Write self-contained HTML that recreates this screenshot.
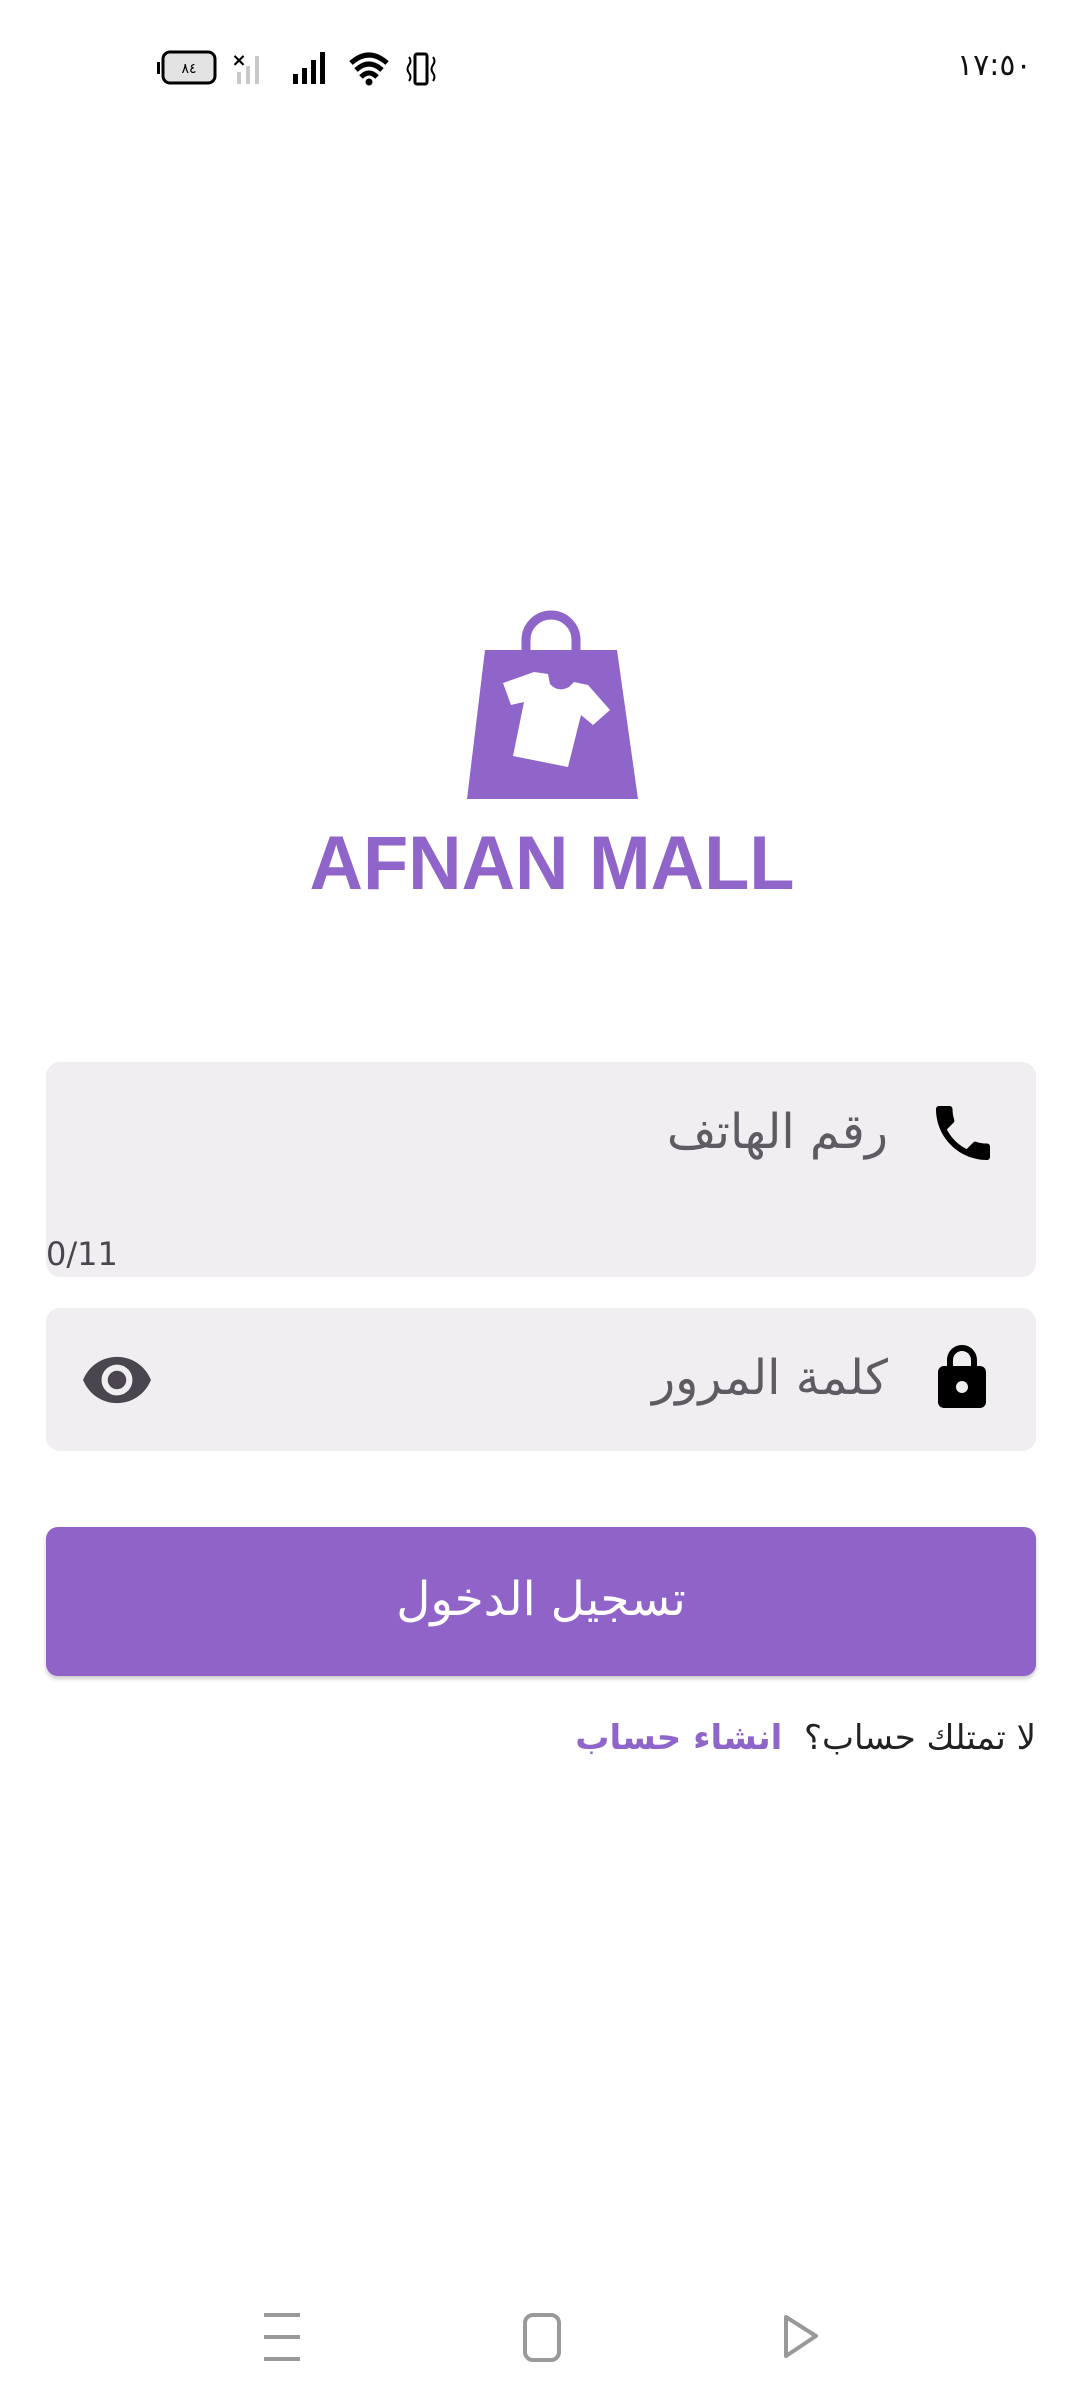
<!DOCTYPE html>
<html><head><meta charset="utf-8"><style>
*{margin:0;padding:0;box-sizing:border-box}
body{width:1080px;height:2400px;background:#fff;position:relative;overflow:hidden;font-family:"Liberation Sans","Noto Sans CJK SC","DejaVu Sans",sans-serif}
.abs{position:absolute}
.field{position:absolute;left:46px;width:990px;background:#f0eef1;border-radius:14px}
.lbl{position:absolute;color:#5f5b63;font-size:48px;direction:rtl;white-space:nowrap;font-family:"DejaVu Sans",sans-serif;font-weight:300}
</style></head><body>
<!-- status bar -->
<div class="abs" style="left:957px;top:48px;font-size:30px;color:#111;font-family:'DejaVu Sans',sans-serif">١٧:٥٠</div>
<svg class="abs" style="left:157px;top:48px" width="290" height="40" viewBox="0 0 290 40">
<rect x="0" y="14" width="3" height="12" fill="#000"/>
<rect x="6" y="4" width="52" height="31" rx="7" fill="#e3e3e3" stroke="#000" stroke-width="3"/>
<text x="32" y="25" font-size="14" text-anchor="middle" font-family="DejaVu Sans" fill="#000">٨٤</text>
<text x="82" y="18" font-size="18" font-weight="bold" font-family="DejaVu Sans" text-anchor="middle">×</text>
<rect x="80" y="24" width="4" height="12" fill="#c8c8c8"/><rect x="89" y="18" width="4" height="18" fill="#c8c8c8"/><rect x="98" y="8" width="4" height="28" fill="#c8c8c8"/>
<rect x="136" y="26" width="5" height="10" fill="#000"/><rect x="145" y="20" width="5" height="16" fill="#000"/><rect x="154" y="12" width="5" height="24" fill="#000"/><rect x="163" y="4" width="5" height="32" fill="#000"/>
<path d="M194 15 Q212 -1 230 15" stroke="#000" stroke-width="5" fill="none"/><path d="M199 22 Q212 10 225 22" stroke="#000" stroke-width="5" fill="none"/><path d="M204 29 Q212 21 220 29" stroke="#000" stroke-width="5" fill="none"/><circle cx="212" cy="34" r="3.5"/>
<rect x="258" y="6" width="12" height="30" rx="2" fill="none" stroke="#000" stroke-width="3"/>
<path d="M252 9 q3 4 0 8 q-3 4 0 8 q3 4 0 8 M276 9 q3 4 0 8 q-3 4 0 8 q3 4 0 8" stroke="#000" stroke-width="2" fill="none"/>
</svg>
<!-- logo -->
<svg class="abs" style="left:280px;top:590px" width="540" height="320" viewBox="0 0 540 320">
<path d="M246 60 V50 a25 25 0 0 1 50 0 V60" stroke="#9065c9" stroke-width="9" fill="none"/>
<polygon points="205,60 337,60 358,209 187,209" fill="#9065c9"/>
<path d="M223 93 L254 82 L268 84 L270 94 Q278 103 289 97 L294 92 L308 95 L330 120 L313 135 L301 125 L288 177 L233 166 L244 112 L231 115 Z" fill="#fff"/>
<text x="272" y="299" text-anchor="middle" font-family="Liberation Sans" font-weight="bold" font-size="76" fill="#9065c9" textLength="485" lengthAdjust="spacingAndGlyphs">AFNAN MALL</text>
</svg>
<!-- field 1 -->
<div class="field" style="top:1062px;height:215px"></div>
<svg class="abs" style="left:927px;top:1097px" width="72" height="72" viewBox="0 0 24 24"><path d="M6.62 10.79c1.44 2.83 3.760 5.14 6.59 6.59l2.2-2.2c.27-.27.67-.36 1.02-.24 1.12.37 2.33.57 3.57.57.55 0 1 .45 1 1V20c0 .55-.45 1-1 1-9.390 0-17-7.610-17-17 0-.55.45-1 1-1h3.5c.55 0 1 .45 1 1 0 1.25.2 2.450.57 3.57.11.35.03.74-.25 1.02l-2.2 2.2z"/></svg>
<div class="lbl" style="right:192px;top:1104px">رقم الهاتف</div>
<div class="abs" style="left:46px;top:1235px;font-size:32px;color:#4a454f;font-family:'DejaVu Sans',sans-serif">0/11</div>
<!-- field 2 -->
<div class="field" style="top:1308px;height:143px"></div>
<svg class="abs" style="left:926px;top:1342px" width="72" height="72" viewBox="0 0 24 24"><path d="M18 8h-1V6c0-2.76-2.24-5-5-5S7 3.24 7 6v2H6c-1.1 0-2 .9-2 2v10c0 1.1.9 2 2 2h12c1.1 0 2-.9 2-2V10c0-1.1-.9-2-2-2zm-6 9c-1.1 0-2-.9-2-2s.9-2 2-2 2 .9 2 2-.9 2-2 2zM9 8V6c0-1.66 1.34-3 3-3s3 1.34 3 3v2H9z"/></svg>
<div class="lbl" style="right:192px;top:1350px">كلمة المرور</div>
<svg class="abs" style="left:80px;top:1343px" width="74" height="74" viewBox="0 0 24 24"><path fill="#4a454f" d="M12 4.5C7 4.5 2.73 7.61 1 12c1.73 4.39 6 7.5 11 7.5s9.27-3.11 11-7.5c-1.73-4.39-6-7.5-11-7.5zM12 17c-2.76 0-5-2.24-5-5s2.24-5 5-5 5 2.24 5 5-2.24 5-5 5zm0-8c-1.66 0-3 1.34-3 3s1.34 3 3 3 3-1.34 3-3-1.34-3-3-3z"/></svg>
<!-- button -->
<div class="abs" style="left:46px;top:1527px;width:990px;height:149px;background:#9063c9;border-radius:12px;box-shadow:0 3px 4px rgba(0,0,0,0.2);color:#fff;font-size:47px;text-align:center;line-height:145px;direction:rtl;font-family:'DejaVu Sans',sans-serif">تسجيل الدخول</div>
<!-- link -->
<div class="abs" style="right:44px;top:1718px;font-size:34px;direction:rtl;white-space:nowrap;color:#222;font-family:'DejaVu Sans',sans-serif">لا تمتلك حساب؟ &nbsp;<b style="color:#9065c9">انشاء حساب</b></div>
<!-- nav -->
<svg class="abs" style="left:0;top:2300px" width="1080" height="80">
<g stroke="#999" stroke-width="4"><line x1="264" y1="15" x2="300" y2="15"/><line x1="264" y1="37" x2="300" y2="37"/><line x1="264" y1="59" x2="300" y2="59"/></g>
<rect x="525" y="15" width="34" height="45" rx="8" fill="none" stroke="#999" stroke-width="4"/>
<path d="M786 17 L816 36 L786 56 Z" fill="none" stroke="#999" stroke-width="4" stroke-linejoin="round"/>
</svg>
</body></html>
